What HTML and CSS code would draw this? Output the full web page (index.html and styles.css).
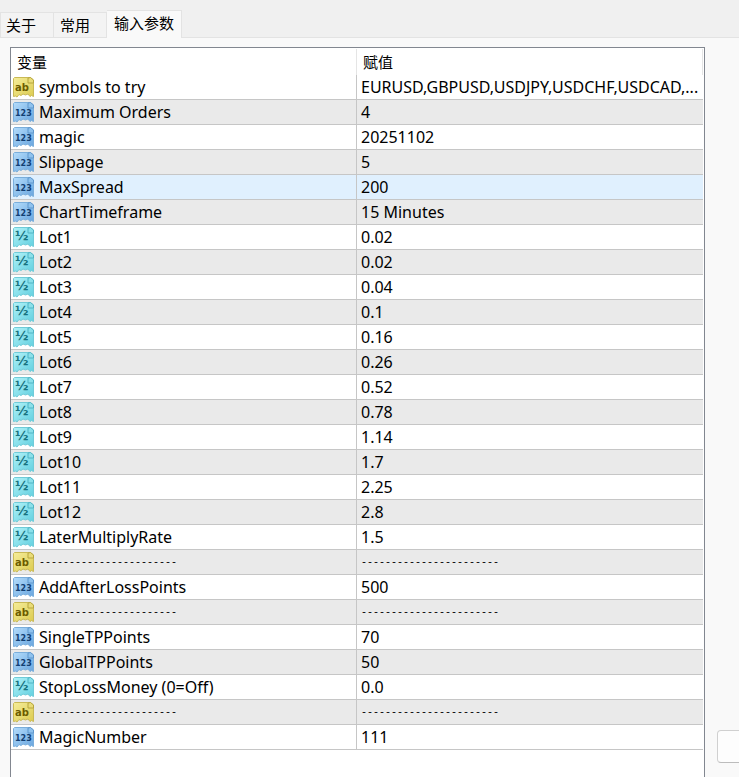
FILE: index.html
```html
<!DOCTYPE html>
<html lang="zh-CN">
<head>
<meta charset="utf-8">
<title>输入参数</title>
<link rel="stylesheet" href="styles.css">
</head>
<body>
<svg class="sprite" aria-hidden="true">
  <defs>
    <linearGradient id="yellow" x1="0" y1="0" x2="1" y2="1"><stop offset="0" stop-color="#f5ed9a"/><stop offset="1" stop-color="#dccb50"/></linearGradient>
    <linearGradient id="blue" x1="0" y1="0" x2="1" y2="1"><stop offset="0" stop-color="#b4dcfb"/><stop offset="1" stop-color="#68a5df"/></linearGradient>
    <linearGradient id="cyan" x1="0" y1="0" x2="1" y2="1"><stop offset="0" stop-color="#b2f2f8"/><stop offset="1" stop-color="#62d0e0"/></linearGradient>
    <path id="sheet" d="M1.5 .5H17L20.500 3V19.500L18.500 18.500L17 19.500L15 17L12.500 18L10 17L8 18.500L6 17.500L4 20L2.500 19L.5 19.500V1.500Z"/>
    <path id="fold" d="M15 1V6H20.500V3L17.500 .5Z"/>
  </defs>
  <symbol id="ab" viewBox="0 0 21 21">
    <use href="#sheet" fill="url(#yellow)" stroke="#c9b956"/>
    <use href="#fold" fill="#e9dc78" stroke="#b7a63f"/>
  </symbol>
  <symbol id="int" viewBox="0 0 21 21">
    <use href="#sheet" fill="url(#blue)" stroke="#7aaedb"/>
    <use href="#fold" fill="#8fc2ee" stroke="#5f97cc"/>
  </symbol>
  <symbol id="dbl" viewBox="0 0 21 21">
    <use href="#sheet" fill="url(#cyan)" stroke="#70cbd8"/>
    <use href="#fold" fill="#8be0ea" stroke="#4fb4c4"/>
  </symbol>
</svg>
<nav class="tabs" role="tablist">
  <button class="tab" role="tab" type="button">关于</button>
  <button class="tab" role="tab" type="button">常用</button>
  <button class="tab active" role="tab" type="button" aria-selected="true">输入参数</button>
</nav>
<main class="pane">
  <div class="list">
    <table class="params">
      <thead><tr><th scope="col">变量</th><th scope="col">赋值</th></tr></thead>
      <tbody>
        <tr><td><svg class="icon ab"><use href="#ab"/><text x="2" y="14">ab</text></svg>symbols to try</td><td>EURUSD,GBPUSD,USDJPY,USDCHF,USDCAD,...</td></tr>
        <tr><td><svg class="icon int"><use href="#int"/><text x="2" y="14">123</text></svg>Maximum Orders</td><td>4</td></tr>
        <tr><td><svg class="icon int"><use href="#int"/><text x="2" y="14">123</text></svg>magic</td><td>20251102</td></tr>
        <tr><td><svg class="icon int"><use href="#int"/><text x="2" y="14">123</text></svg>Slippage</td><td>5</td></tr>
        <tr class="hot"><td><svg class="icon int"><use href="#int"/><text x="2" y="14">123</text></svg>MaxSpread</td><td>200</td></tr>
        <tr><td><svg class="icon int"><use href="#int"/><text x="2" y="14">123</text></svg>ChartTimeframe</td><td>15 Minutes</td></tr>
        <tr><td><svg class="icon dbl"><use href="#dbl"/><text x="2" y="13">½</text></svg>Lot1</td><td>0.02</td></tr>
        <tr><td><svg class="icon dbl"><use href="#dbl"/><text x="2" y="13">½</text></svg>Lot2</td><td>0.02</td></tr>
        <tr><td><svg class="icon dbl"><use href="#dbl"/><text x="2" y="13">½</text></svg>Lot3</td><td>0.04</td></tr>
        <tr><td><svg class="icon dbl"><use href="#dbl"/><text x="2" y="13">½</text></svg>Lot4</td><td>0.1</td></tr>
        <tr><td><svg class="icon dbl"><use href="#dbl"/><text x="2" y="13">½</text></svg>Lot5</td><td>0.16</td></tr>
        <tr><td><svg class="icon dbl"><use href="#dbl"/><text x="2" y="13">½</text></svg>Lot6</td><td>0.26</td></tr>
        <tr><td><svg class="icon dbl"><use href="#dbl"/><text x="2" y="13">½</text></svg>Lot7</td><td>0.52</td></tr>
        <tr><td><svg class="icon dbl"><use href="#dbl"/><text x="2" y="13">½</text></svg>Lot8</td><td>0.78</td></tr>
        <tr><td><svg class="icon dbl"><use href="#dbl"/><text x="2" y="13">½</text></svg>Lot9</td><td>1.14</td></tr>
        <tr><td><svg class="icon dbl"><use href="#dbl"/><text x="2" y="13">½</text></svg>Lot10</td><td>1.7</td></tr>
        <tr><td><svg class="icon dbl"><use href="#dbl"/><text x="2" y="13">½</text></svg>Lot11</td><td>2.25</td></tr>
        <tr><td><svg class="icon dbl"><use href="#dbl"/><text x="2" y="13">½</text></svg>Lot12</td><td>2.8</td></tr>
        <tr><td><svg class="icon dbl"><use href="#dbl"/><text x="2" y="13">½</text></svg>LaterMultiplyRate</td><td>1.5</td></tr>
        <tr class="rule"><td><svg class="icon ab"><use href="#ab"/><text x="2" y="14">ab</text></svg>-----------------------</td><td>-----------------------</td></tr>
        <tr><td><svg class="icon int"><use href="#int"/><text x="2" y="14">123</text></svg>AddAfterLossPoints</td><td>500</td></tr>
        <tr class="rule"><td><svg class="icon ab"><use href="#ab"/><text x="2" y="14">ab</text></svg>-----------------------</td><td>-----------------------</td></tr>
        <tr><td><svg class="icon int"><use href="#int"/><text x="2" y="14">123</text></svg>SingleTPPoints</td><td>70</td></tr>
        <tr><td><svg class="icon int"><use href="#int"/><text x="2" y="14">123</text></svg>GlobalTPPoints</td><td>50</td></tr>
        <tr><td><svg class="icon dbl"><use href="#dbl"/><text x="2" y="13">½</text></svg>StopLossMoney (0=Off)</td><td>0.0</td></tr>
        <tr class="rule"><td><svg class="icon ab"><use href="#ab"/><text x="2" y="14">ab</text></svg>-----------------------</td><td>-----------------------</td></tr>
        <tr><td><svg class="icon int"><use href="#int"/><text x="2" y="14">123</text></svg>MagicNumber</td><td>111</td></tr>
      </tbody>
    </table>
  </div>
  <div class="side"><button class="action" type="button"></button></div>
</main>
</body>
</html>
```
FILE: styles.css
```css
* { box-sizing: border-box; }
body {
  margin: 0;
  height: 100vh;
  display: flex;
  flex-direction: column;
  overflow: hidden;
  background: #f0f0f0;
  color: #000;
  font: 16px/20px "Noto Sans", "Noto Sans CJK SC", sans-serif;
}
.sprite { position: absolute; width: 0; height: 0; }
.tabs {
  display: flex;
  align-items: flex-end;
  height: 38px;
  flex: none;
  box-shadow: inset 0 -1px #e3e3e3;
}
.tab {
  height: 26px;
  padding: 0 17px 0 5px;
  border: 1px solid #e3e3e3;
  border-left-width: 0;
  background: #f3f3f3;
  color: inherit;
  font: 15px/20px "Noto Sans CJK SC", sans-serif;
}
.tab:first-child { border-left-width: 1px; }
.tab + .tab { padding: 0 16px 0 6px; }
.tab.active {
  height: 28px;
  padding: 0 7px 4px;
  border-bottom: 0;
  background: #f9f9f9;
}
.pane {
  flex: 1;
  min-height: 0;
  display: flex;
  background: #f9f9f9;
  padding: 9px 0 0 10px;
}
.list {
  flex: 1;
  min-width: 0;
  border: 1px solid #828790;
  border-bottom: 0;
  padding: 1px 1px 0 0;
  background: #fff;
  overflow: hidden;
}
.params {
  width: 100%;
  table-layout: fixed;
  border-collapse: separate;
  border-spacing: 0;
}
th, td {
  text-align: left;
  font-weight: 400;
  white-space: nowrap;
  overflow: hidden;
}
th {
  height: 26px;
  padding: 0 6px;
  border-right: 1px solid #e5e5e5;
  font: 15px/20px "Noto Sans CJK SC", sans-serif;
}
td {
  height: 25px;
  padding: 2px 4px 0;
  border-bottom: 1px solid #c6c6c6;
  vertical-align: top;
}
th:first-child { width: 50%; }
td:first-child {
  padding: 2px 2px 0;
  border-right: 1px solid #c6c6c6;
}
tbody tr:nth-child(even) { background: #eaeaea; }
tbody tr.hot { background: #e0f0fe; }
.rule { font: 10px/22px "Liberation Mono", monospace; }
.icon {
  float: left;
  width: 21px;
  height: 21px;
  margin-right: 5px;
  font-family: "DejaVu Sans", sans-serif;
  font-weight: 700;
}
.ab { font-size: 10px; fill: #6b5c00; }
.int { font-size: 8px; fill: #123f73; }
.dbl { font-size: 13px; fill: #16727f; }
.side {
  width: 34px;
  padding: 0 0 14px 12px;
  display: flex;
  align-items: flex-end;
  overflow: hidden;
}
.action {
  flex: none;
  width: 96px;
  height: 33px;
  border: 1px solid #d0d0d0;
  border-bottom-color: #bcbcbc;
  border-radius: 4px;
  background: #fdfdfd;
}
```
